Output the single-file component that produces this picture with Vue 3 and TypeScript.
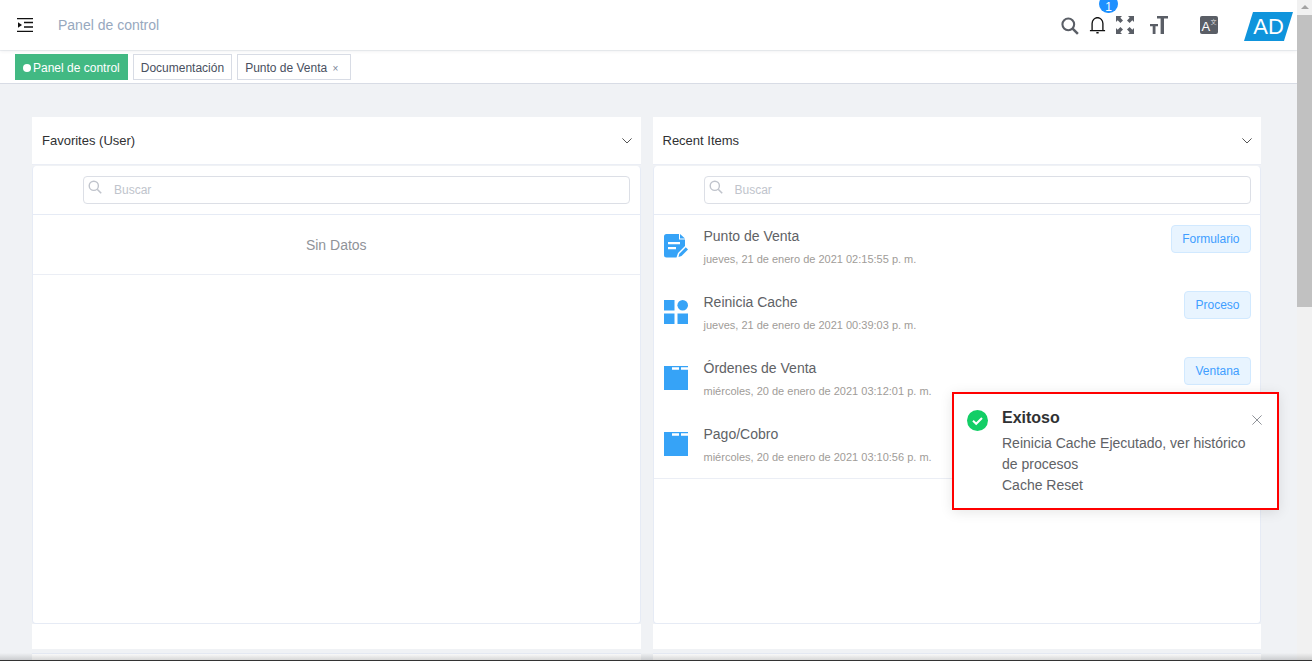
<script setup lang="ts">
interface Recent { name: string; date: string; tag: string; icon: string }
const items: Recent[] = [
  { name: 'Punto de Venta', date: 'jueves, 21 de enero de 2021 02:15:55 p. m.', tag: 'Formulario', icon: 'form' },
  { name: 'Reinicia Cache', date: 'jueves, 21 de enero de 2021 00:39:03 p. m.', tag: 'Proceso', icon: 'proc' },
  { name: 'Órdenes de Venta', date: 'miércoles, 20 de enero de 2021 03:12:01 p. m.', tag: 'Ventana', icon: 'win' },
  { name: 'Pago/Cobro', date: 'miércoles, 20 de enero de 2021 03:10:56 p. m.', tag: 'Ventana', icon: 'win' },
]
</script>

<template>
  <div class="page">
    <div class="content">
      <header class="top">
        <svg class="menu" width="16" height="14" viewBox="0 0 16 14"><path d="M0 .5h16M0 13.500h16M7 4.500h9M7 9h9" stroke="#111" stroke-width="1.300" fill="none"/><path d="M1 4.200v5.600L5 7z" fill="#111"/></svg>
        <span class="crumb">Panel de control</span>
        <div class="actions">
          <svg class="a-search" width="18" height="18" viewBox="0 0 19 19"><circle cx="7.700" cy="7.700" r="6.200" fill="none" stroke="#5a5e66" stroke-width="2.200"/><path d="M12 12l5.800 5.800" stroke="#5a5e66" stroke-width="2.600"/></svg>
          <div class="bell">
            <svg width="17" height="18" viewBox="0 0 17 19"><path d="M.5 15.500h16M2.800 15.500V8a5.700 6.200 0 0 1 11.400 0v7.500" fill="none" stroke="#111" stroke-width="1.400"/><path d="M7.300 17h2.400v1.500H7.300zM7.300 1h2.400v1.500H7.300z" fill="#111"/></svg>
            <span class="badge">1</span>
          </div>
          <svg class="a-full" width="18" height="18" viewBox="0 0 18 18" fill="#5a5e66"><path d="M0 0h6L4.300 1.700 7 4.400 4.400 7 1.700 4.300 0 6zM18 0v6l-1.700-1.700L13.600 7 11 4.400l2.700-2.700L12 0zM0 18v-6l1.700 1.700L4.400 11 7 13.600l-2.700 2.700L6 18zM18 18h-6l1.700-1.700L11 13.600l2.600-2.600 2.700 2.700L18 12z"/></svg>
          <svg class="a-size" width="18" height="18" viewBox="0 0 18 18" fill="#5a5e66"><path d="M7 0h11v2.600h-4V18h-3.400V2.600H7zM0 8h8v2.200H5.500V18H2.700V10.200H0z"/></svg>
          <svg class="a-lang" width="18" height="18" viewBox="0 0 18 18"><rect width="18" height="18" rx="2" fill="#5a5e66"/><text x="1.500" y="15" font-size="13" fill="#fff" font-family="Liberation Sans">A</text><text x="10.500" y="8" font-size="6" fill="#ddd" font-family="Noto Sans CJK SC">文</text></svg>
          <div class="avatar"><span>AD</span></div>
        </div>
      </header>
      <nav class="tags">
        <span class="tag on"><i></i>Panel de control</span>
        <span class="tag">Documentación</span>
        <span class="tag">Punto de Venta <b>×</b></span>
      </nav>
      <main class="main">
        <section class="col">
          <div class="card-head"><span>Favorites (User)</span><svg width="10" height="6" viewBox="0 0 10 6"><path d="M.4.400L5 5l4.600-4.600" fill="none" stroke="#555" stroke-width="1"/></svg></div>
          <div class="card-body">
            <div class="search-row">
              <div class="search">
                <svg width="14" height="14" viewBox="0 0 14 14"><circle cx="5.800" cy="5.800" r="4.600" fill="none" stroke="#c0c4cc" stroke-width="1.400"/><path d="M9.200 9.200l4 4" stroke="#c0c4cc" stroke-width="1.600"/></svg>
                <span>Buscar</span>
              </div>
            </div>
            <div class="empty">Sin Datos</div>
          </div>
          <div class="card-foot"></div>
          <div class="next"></div>
        </section>
        <section class="col">
          <div class="card-head"><span>Recent Items</span><svg width="10" height="6" viewBox="0 0 10 6"><path d="M.4.400L5 5l4.600-4.600" fill="none" stroke="#555" stroke-width="1"/></svg></div>
          <div class="card-body">
            <div class="search-row">
              <div class="search">
                <svg width="14" height="14" viewBox="0 0 14 14"><circle cx="5.800" cy="5.800" r="4.600" fill="none" stroke="#c0c4cc" stroke-width="1.400"/><path d="M9.200 9.200l4 4" stroke="#c0c4cc" stroke-width="1.600"/></svg>
                <span>Buscar</span>
              </div>
            </div>
            <ul class="list">
              <li v-for="it in items" :key="it.name" class="row">
                <svg v-if="it.icon === 'form'" class="ico" width="24" height="24" viewBox="0 0 24 24" fill="#36a3f7"><path d="M2.500 0H15v5.500h6V12l-7 7-1.500 4.500h-10A2.500 2.500 0 0 1 0 21V2.500A2.500 2.500 0 0 1 2.500 0z"/><path d="M16 0l5 4.500h-5z"/><path d="M4 8h12v2.200H4zM4 13h8v2.200H4z" fill="#fff"/><path d="M14.500 23l.8-3.200 6.500-6.500 2.200 2.200-6.500 6.500z"/></svg>
                <svg v-else-if="it.icon === 'proc'" class="ico" width="24" height="24" viewBox="0 0 24 24" fill="#36a3f7"><rect width="10.500" height="10.500"/><circle cx="18.700" cy="5.300" r="5.300"/><rect y="13.500" width="10.500" height="10.500"/><rect x="13.500" y="13.500" width="10.500" height="10.500"/></svg>
                <svg v-else class="ico" width="24" height="24" viewBox="0 0 24 24"><path d="M0 0h24v24H0z" fill="#36a3f7"/><path d="M8 1.200h7v2.500H8zM17 1.200h7v2.500h-7z" fill="#fff"/></svg>
                <div class="txt">
                  <div class="name">{{ it.name }}</div>
                  <div class="date">{{ it.date }}</div>
                </div>
                <span class="btn">{{ it.tag }}</span>
              </li>
            </ul>
          </div>
          <div class="card-foot"></div>
          <div class="next"></div>
        </section>
      </main>
    </div>
    <aside class="bar"><div class="up"></div><div class="thumb"></div></aside>
    <div class="note">
      <svg class="ok" width="21" height="21" viewBox="0 0 21 21"><circle cx="10.500" cy="10.500" r="10.500" fill="#13ce66"/><path d="M6 10.800l3.200 3 5.800-5.800" fill="none" stroke="#fff" stroke-width="2"/></svg>
      <div class="note-txt">
        <h2>Exitoso</h2>
        <p>Reinicia Cache Ejecutado, ver histórico de procesos<br>Cache Reset</p>
      </div>
      <svg class="close" width="10" height="10" viewBox="0 0 10 10"><path d="M.4.400l9.200 9.200M9.600.400L.4 9.600" stroke="#909399" stroke-width="1"/></svg>
    </div>
    <div class="edge"></div>
  </div>
</template>

<style>
html, body { margin: 0; overflow: hidden; }
</style>

<style scoped>
.page { position: relative; display: flex; height: 661px; overflow: hidden; font-family: "Liberation Sans", Arial, sans-serif; background: #f0f2f5; }
.content { flex: 1; min-width: 0; display: flex; flex-direction: column; }
.top { height: 50px; flex: none; display: flex; align-items: center; padding-left: 17px; padding-right: 4px; background: #fff; box-shadow: 0 1px 4px rgba(0, 21, 41, .08); position: relative; }
.crumb { margin-left: 25px; font-size: 14px; color: #97a8be; }
.actions { margin-left: auto; display: flex; align-items: center; height: 50px; }
.a-search { margin-top: 1px; }
.bell { position: relative; margin-left: 10px; width: 17px; height: 18px; margin-top: -1px; line-height: 0; }
.badge { position: absolute; left: 10px; top: -21px; width: 19px; height: 18px; border-radius: 10px; background: #1e90ff; color: #fff; font-size: 12px; line-height: 24px; text-align: center; }
.a-full { margin-left: 10px; }
.a-size { margin-left: 16px; }
.a-lang { margin-left: 32px; }
.avatar { margin-left: 26px; width: 49px; height: 29px; background: #0f94dc; clip-path: polygon(18.4% 0, 100% 0, 81.600% 100%, 0 100%); color: #fff; font-size: 22px; line-height: 29px; text-align: center; margin-top: 3px; }
.tags { height: 33px; flex: none; box-sizing: border-box; margin-top: 1px; padding: 3px 0 0 15px; background: #fff; border-bottom: 1px solid #d8dce5; display: flex; gap: 5px; align-items: flex-start; }
.tag { box-sizing: border-box; height: 26px; line-height: 26px; padding: 0 7px; border: 1px solid #d8dce5; font-size: 12px; color: #495060; background: #fff; }
.tag.on { background: #42b983; border-color: #42b983; color: #fff; padding: 0 7px; }
.tag.on i { display: inline-block; width: 8px; height: 8px; border-radius: 50%; background: #fff; margin: 0 2px 0 0; }
.tag b { font-weight: 400; font-size: 10px; color: #7a8598; margin-left: 2px; margin-right: 5px; }
.main { flex: 1; display: flex; gap: 12px; padding: 33px 36px 0 32px; min-height: 0; }
.col { flex: 1; min-width: 0; display: flex; flex-direction: column; }
.card-head { height: 48px; flex: none; box-sizing: border-box; display: flex; align-items: center; justify-content: space-between; padding: 0 9px 0 10px; background: #fff; font-size: 13px; color: #303133; border-bottom: 1px solid #ebeef5; }
.card-body { height: 458px; flex: none; box-sizing: border-box; margin-top: 1px; background: #fff; border: 1px solid #e6ebf5; border-top: 0; border-radius: 4px; }
.search-row { height: 49px; box-sizing: border-box; padding: 10px 9.500px 0 50px; border-bottom: 1px solid #e6ebf5; }
.search { box-sizing: border-box; height: 28px; border: 1px solid #dcdfe6; border-radius: 4px; display: flex; align-items: center; padding-left: 4px; font-size: 12px; color: #c0c4cc; }
.search svg { margin-top: -6px; }
.search span { margin-left: 12px; }
.empty { height: 60px; box-sizing: border-box; border-bottom: 1px solid #ebeef5; text-align: center; line-height: 60px; font-size: 14px; color: #909399; }
.list { list-style: none; margin: 0; padding: 0; border-bottom: 1px solid #ebeef5; height: 264px; box-sizing: border-box; }
.row { height: 66px; box-sizing: border-box; padding: 10px 9px 0 10px; display: flex; align-items: flex-start; }
.ico { flex: none; margin-top: 9px; }
.txt { flex: 1; margin-left: 16px; }
.name { font-size: 14px; color: #606266; line-height: 16px; margin-top: 3px; }
.date { font-size: 11px; color: #a09c98; line-height: 13px; margin-top: 9px; }
.btn { box-sizing: border-box; height: 28px; line-height: 26px; padding: 0 10.500px; border: 1px solid #d1e9ff; border-radius: 4px; background: #e8f4ff; color: #409eff; font-size: 12px; }
.card-foot { height: 25px; flex: none; background: #fff; }
.next { height: 9px; flex: none; margin-top: 4px; background: #fff; border-top: 1px solid #e6ebf5; }
.bar { width: 15px; flex: none; background: #f1f1f1; position: relative; }
.up { height: 15px; position: relative; }
.up::after { content: ""; position: absolute; left: 4px; top: 5px; border: 4px solid transparent; border-top: 0; border-bottom-color: #a3a3a3; }
.thumb { height: 292px; background: #c1c1c1; }
.note { position: absolute; left: 952px; top: 392px; width: 327px; height: 118px; box-sizing: border-box; border: 2px solid #f00; background: #fff; padding: 13px 15px 13px 13px; display: flex; align-items: flex-start; box-shadow: 0 2px 12px rgba(0, 0, 0, .1); }
.ok { flex: none; margin-top: 3px; }
.note-txt { margin-left: 14px; flex: 1; min-width: 0; padding-right: 1px; }
.note-txt h2 { margin: 0; font-size: 16px; line-height: 22px; font-weight: 700; color: #303133; }
.note-txt p { margin: 4px 0 0; font-size: 14px; line-height: 21px; color: #606266; }
.close { flex: none; margin-top: 8px; }
.edge { position: absolute; left: 0; right: 0; bottom: 0; height: 8px; background: linear-gradient(to bottom, rgba(60, 60, 60, 0), rgba(60, 60, 60, .2) 85%, #333 88%); pointer-events: none; }
</style>
